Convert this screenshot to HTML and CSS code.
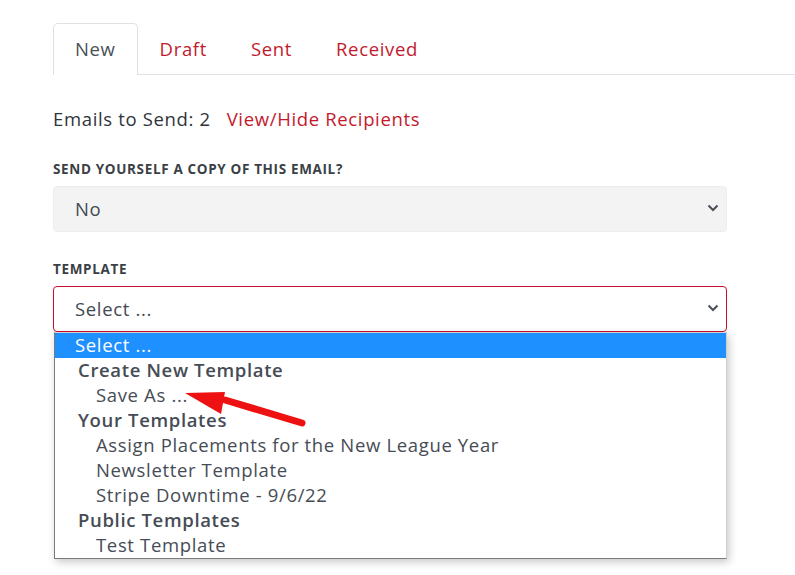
FILE: index.html
```html
<!DOCTYPE html>
<html lang="en">
<head>
<meta charset="utf-8">
<title>Compose Email</title>
<link rel="stylesheet" href="styles.css">
</head>
<body>
<div class="page">
  <ul class="tabs">
    <li class="tab active">New</li>
    <li class="tab">Draft</li>
    <li class="tab">Sent</li>
    <li class="tab">Received</li>
  </ul>
  <div class="form">
    <div class="count-row">
      <span class="count">Emails to Send: 2</span>
      <a class="link">View/Hide Recipients</a>
    </div>
    <div class="field">
      <div class="label">SEND YOURSELF A COPY OF THIS EMAIL?</div>
      <div class="select grey">
        <span>No</span>
        <svg class="chev" width="12" height="8" viewBox="0 0 12 8"><path d="M1.5 1.5 L6 6 L10.5 1.5" fill="none" stroke="#4a4f57" stroke-width="2"/></svg>
      </div>
    </div>
    <div class="field template">
      <div class="label">TEMPLATE</div>
      <div class="select focused">
        <span>Select ...</span>
        <svg class="chev" width="12" height="8" viewBox="0 0 12 8"><path d="M1.5 1.5 L6 6 L10.5 1.5" fill="none" stroke="#4a4f57" stroke-width="2"/></svg>
        <div class="dropdown">
          <div class="opt selected">Select ...</div>
          <div class="group">Create New Template</div>
          <div class="opt sub">Save As ...</div>
          <div class="group">Your Templates</div>
          <div class="opt sub">Assign Placements for the New League Year</div>
          <div class="opt sub">Newsletter Template</div>
          <div class="opt sub">Stripe Downtime - 9/6/22</div>
          <div class="group">Public Templates</div>
          <div class="opt sub">Test Template</div>
        </div>
      </div>
    </div>
  </div>
  <svg class="arrow" width="140" height="50" viewBox="0 0 140 50">
    <line x1="40" y1="10" x2="117" y2="33" stroke="#ee1111" stroke-width="7" stroke-linecap="round"/>
    <polygon points="0,3 40,2 36,24" fill="#ee1111"/>
  </svg>
</div>
</body>
</html>
```
FILE: styles.css
```css
* { box-sizing: border-box; }
html, body { margin: 0; padding: 0; background: #fff; }
body {
  font-family: "Open Sans", Lato, sans-serif;
  color: #3b4049;
}
.page {
  position: relative;
  padding: 23px 0 0 53px;
  height: 575px;
}
.tabs {
  list-style: none;
  margin: 0;
  padding: 0;
  display: flex;
  border-bottom: 1px solid #dee2e6;
}
.tab {
  font-size: 18.5px;
  letter-spacing: 0.65px;
  line-height: 27px;
  padding: 11px 21px 12px;
  color: #c31a2e;
  border: 1px solid transparent;
  border-bottom: 0;
  margin-bottom: -1px;
}
.tab.active {
  color: #4a5058;
  border-color: #dee2e6;
  border-radius: 5px 5px 0 0;
  background: #fff;
  padding-bottom: 13px;
}
.form { width: 674px; }
.count-row {
  margin-top: 30px;
  font-size: 18.5px;
  letter-spacing: 0.65px;
  line-height: 27px;
  display: flex;
  gap: 16px;
}
.count { color: #2f343b; }
.link { color: #c31a2e; }
.field { margin-top: 28px; }
.field.template { margin-top: 28px; }
.label {
  font-size: 13.5px;
  font-weight: 700;
  line-height: 18px;
  color: #3b3f46;
  letter-spacing: 0.65px;
  margin-bottom: 8px;
}
.select {
  position: relative;
  height: 46px;
  border-radius: 4px;
  display: flex;
  align-items: center;
  justify-content: space-between;
  padding: 0 7px 2px 21px;
  font-size: 18.5px;
  letter-spacing: 0.65px;
  color: #444a53;
}
.select.grey {
  background: #f3f3f3;
  border: 1px solid #eeeeee;
}
.select.focused {
  background: #fff;
  border: 1px solid #c8102e;
  box-shadow: 0 3px 4px -2px rgba(0,0,0,0.12);
}
.chev { display: block; }
.dropdown {
  position: absolute;
  top: 45px;
  left: 0;
  right: -1px;
  background: #fff;
  border: 1px solid #7a7a7a;
  border-top-color: #d0d0d0;
  border-right-color: #cfcfcf;
  box-shadow: 2px 3px 8px rgba(0,0,0,0.22);
  z-index: 5;
}
.opt, .group {
  height: 25px;
  line-height: 23px;
  padding-bottom: 2px;
  font-size: 18.5px;
  letter-spacing: 0.65px;
  white-space: nowrap;
  color: #464c55;
}
.opt { padding-left: 20px; }
.opt.selected { background: #1e90ff; color: #fff; }
.group { font-weight: 600; padding-left: 23px; color: #464c55; }
.opt.sub { padding-left: 41px; }
.arrow {
  position: absolute;
  left: 185px;
  top: 390px;
  z-index: 10;
}
```
